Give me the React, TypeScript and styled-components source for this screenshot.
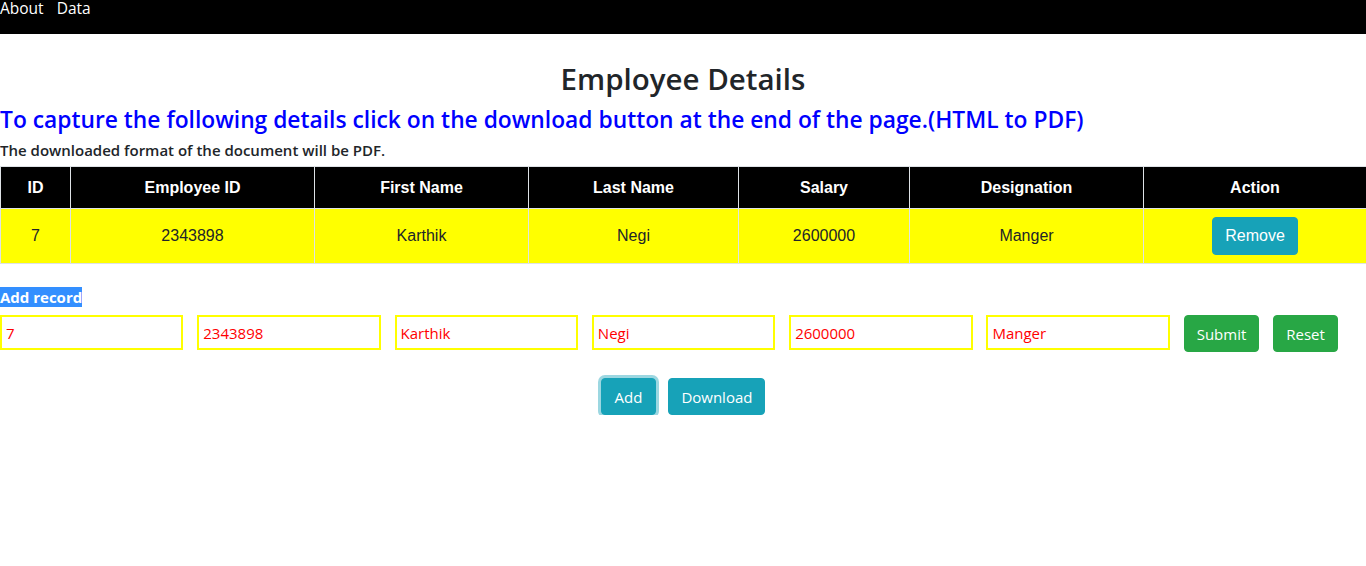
import styled, { createGlobalStyle } from "styled-components";

const GlobalStyle = createGlobalStyle`
  body {
    margin: 0;
    font-family: "Open Sans", "Noto Sans", sans-serif;
    color: #212529;
    background: #fff;
  }
  * { box-sizing: border-box; }
`;

const employee = {
  id: "7",
  employeeId: "2343898",
  firstName: "Karthik",
  lastName: "Negi",
  salary: "2600000",
  designation: "Manger",
};

const columns = [
  { title: "ID", width: 70 },
  { title: "Employee ID", width: 244 },
  { title: "First Name", width: 214 },
  { title: "Last Name", width: 210 },
  { title: "Salary", width: 171 },
  { title: "Designation", width: 234 },
  { title: "Action", width: 223 },
];

function App() {
  const values = [
    employee.id,
    employee.employeeId,
    employee.firstName,
    employee.lastName,
    employee.salary,
    employee.designation,
  ];
  return (
    <>
      <GlobalStyle />
      <Nav>
        <NavLink>About</NavLink>
        <NavLink>Data</NavLink>
      </Nav>
      <Title>Employee Details</Title>
      <Subtitle>
        To capture the following details click on the download button at the end of the page.(HTML to PDF)
      </Subtitle>
      <Note>The downloaded format of the document will be PDF.</Note>
      <Table>
        <colgroup>
          {columns.map((c) => (
            <col key={c.title} style={{ width: c.width }} />
          ))}
        </colgroup>
        <thead>
          <tr>
            {columns.map((c) => (
              <Th key={c.title}>{c.title}</Th>
            ))}
          </tr>
        </thead>
        <tbody>
          <tr>
            {values.map((v, i) => (
              <Td key={i}>{v}</Td>
            ))}
            <Td>
              <RemoveButton>Remove</RemoveButton>
            </Td>
          </tr>
        </tbody>
      </Table>
      <FormSection>
        <Label>
          <Selected>Add record</Selected>
        </Label>
        <FormRow>
          {values.map((v, i) => (
            <Field key={i} defaultValue={v} />
          ))}
          <Button $kind="success">Submit</Button>
          <Button $kind="success">Reset</Button>
        </FormRow>
      </FormSection>
      <Actions>
        <Button $kind="info" $focused>
          Add
        </Button>
        <Button $kind="info">Download</Button>
      </Actions>
    </>
  );
}

export default App;

const Nav = styled.nav`
  background: #000;
  height: 34px;
  display: flex;
  align-items: flex-start;
  gap: 13px;
`;

const NavLink = styled.a`
  color: #fff;
  font-size: 15.5px;
  line-height: 16px;
  cursor: pointer;
`;

const Title = styled.h2`
  margin: 25px 0 0;
  text-align: center;
  font-size: 29.5px;
  font-weight: 600;
  line-height: 40px;
`;

const Subtitle = styled.h3`
  margin: 6px 0 0;
  color: #0000ff;
  font-size: 22.8px;
  font-weight: 600;
  line-height: 29px;
`;

const Note = styled.h6`
  margin: 6px 0 0;
  font-size: 15px;
  font-weight: 600;
  line-height: 20px;
`;

const Table = styled.table`
  margin-top: 6px;
  width: 100%;
  border-collapse: collapse;
  table-layout: fixed;
  font-family: "Liberation Sans", Arial, sans-serif;
  font-size: 16px;
  border-top: 1px solid #dee2e6;
`;

const Th = styled.th`
  background: #000;
  color: #fff;
  height: 42px;
  border: 1px solid #dee2e6;
  font-weight: bold;
  text-align: center;
  vertical-align: middle;
`;

const Td = styled.td`
  background: #ffff00;
  height: 55px;
  border: 1px solid #dee2e6;
  text-align: center;
  vertical-align: middle;
  color: #212529;
`;

const RemoveButton = styled.button`
  background: #17a2b8;
  color: #fff;
  border: 1px solid #17a2b8;
  border-radius: 4px;
  font-family: "Liberation Sans", Arial, sans-serif;
  font-size: 16px;
  height: 38px;
  padding: 0 12px;
  cursor: pointer;
`;

const FormSection = styled.div`
  margin-top: 24px;
`;

const Label = styled.div`
  font-size: 15px;
  font-weight: 700;
  line-height: 19px;
`;

const Selected = styled.span`
  background: #338fff;
  color: #fff;
`;

const FormRow = styled.div`
  margin-top: 8px;
  display: flex;
  align-items: flex-start;
  gap: 13.9px;
`;

const Field = styled.input`
  width: 183.4px;
  height: 35px;
  border: 2px solid #ffff00;
  padding: 0 4px;
  color: #ff0000;
  font-family: "Open Sans", "Noto Sans", sans-serif;
  font-size: 15px;
  outline: none;
`;

const Button = styled.button<{ $kind: "success" | "info"; $focused?: boolean }>`
  background: ${(p) => (p.$kind === "success" ? "#28a745" : "#17a2b8")};
  border: 1px solid ${(p) => (p.$kind === "success" ? "#28a745" : "#17a2b8")};
  color: #fff;
  border-radius: 4px;
  height: 37px;
  padding: 0 ${(p) => (p.$focused ? 13 : 12)}px;
  font-family: "Open Sans", "Noto Sans", sans-serif;
  font-size: 15px;
  cursor: pointer;
  box-shadow: ${(p) => (p.$focused ? "0 0 0 3px rgba(58, 176, 195, 0.5)" : "none")};
`;

const Actions = styled.div`
  margin-top: 26px;
  display: flex;
  justify-content: center;
  gap: 12px;
`;
